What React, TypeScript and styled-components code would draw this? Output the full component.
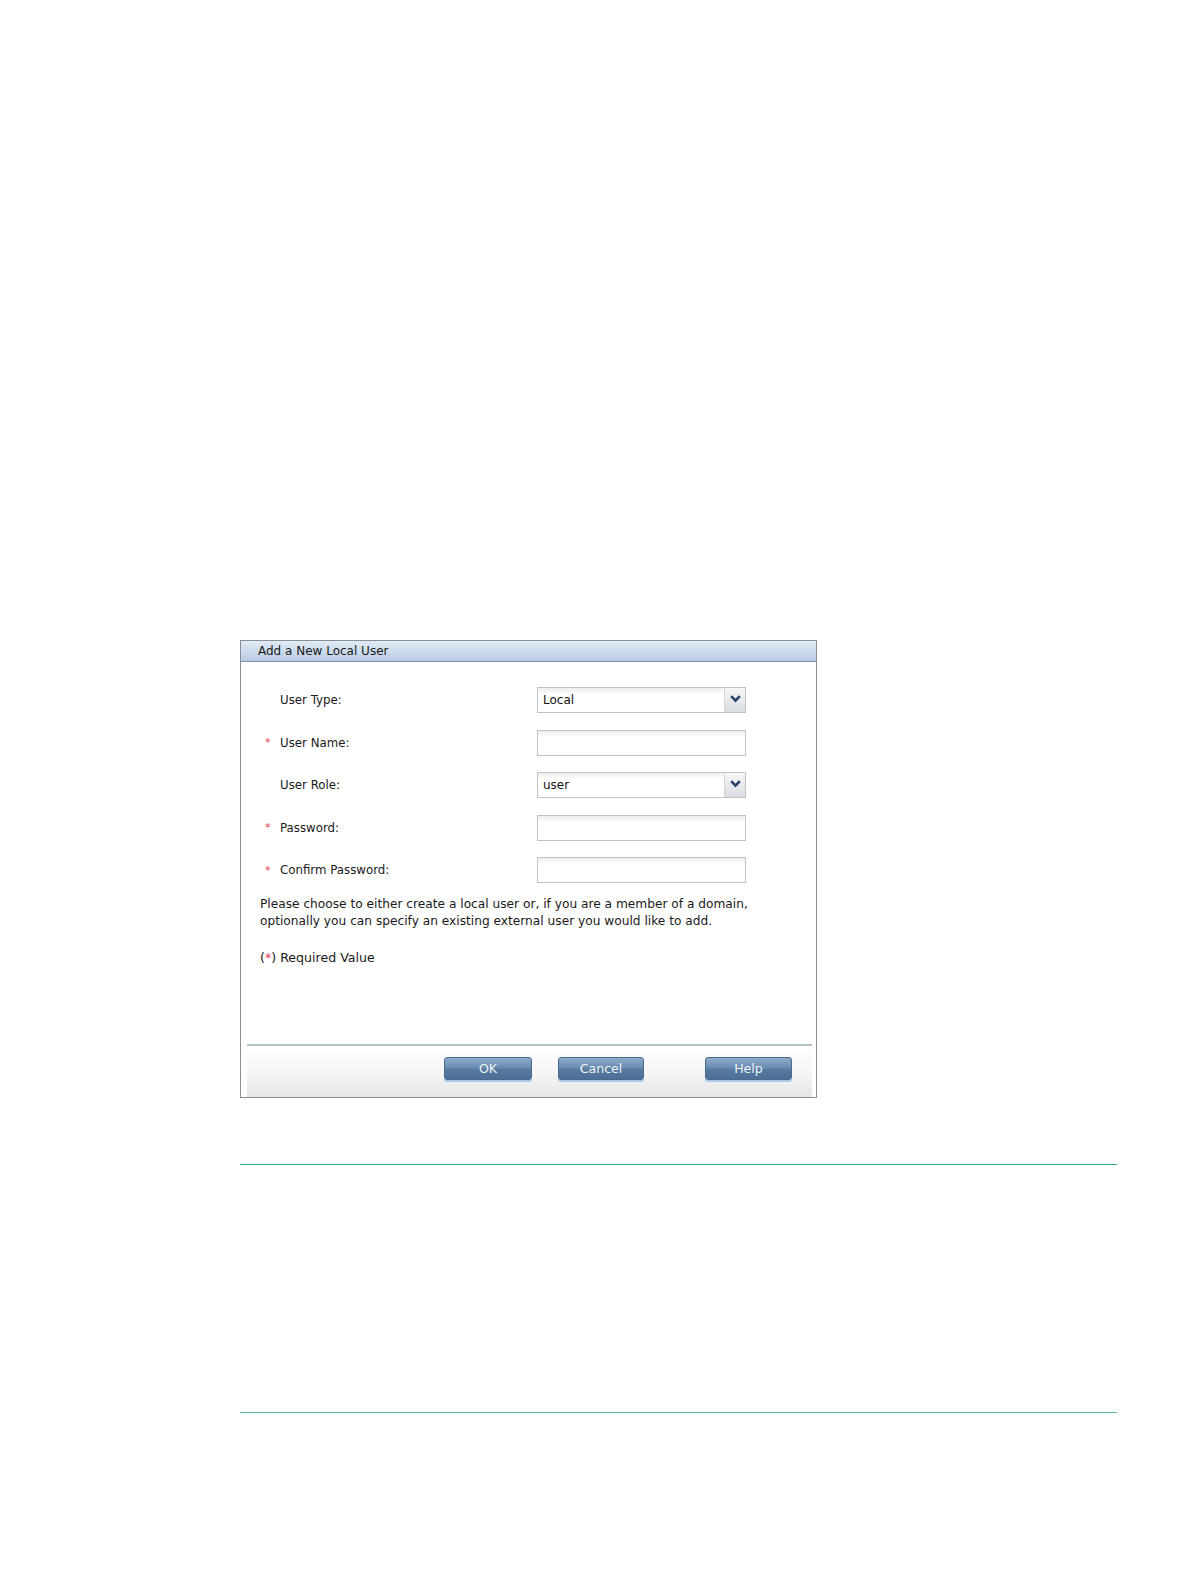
import React from "react";
import styled, { createGlobalStyle } from "styled-components";

const GlobalStyle = createGlobalStyle`
  html, body {
    margin: 0;
    padding: 0;
    background: #ffffff;
  }
  body {
    font-family: "DejaVu Sans", Verdana, sans-serif;
    color: #1a1a1a;
  }
`;

const Page = styled.div`
  width: 1189px;
  height: 1584px;
  box-sizing: border-box;
  padding: 640px 0 0 240px;
  display: flex;
  flex-direction: column;
`;

const Dialog = styled.div`
  width: 577px;
  height: 458px;
  box-sizing: border-box;
  border: 1px solid #8a8f96;
  display: flex;
  flex-direction: column;
  background: #ffffff;
`;

const TitleBar = styled.div`
  height: 21px;
  flex-shrink: 0;
  box-sizing: border-box;
  border-bottom: 1px solid #7f95ad;
  background: linear-gradient(to bottom, #e2eaf5 0%, #cbdaec 55%, #b9cce4 100%);
  padding-left: 17px;
  display: flex;
  align-items: center;
  font-size: 12px;
`;

const Body = styled.div`
  flex: 1;
  padding: 25px 0 0 19px;
  display: flex;
  flex-direction: column;
`;

const Form = styled.div`
  display: flex;
  flex-direction: column;
  gap: 16.5px;
`;

const Row = styled.div`
  display: flex;
  align-items: center;
  height: 26px;
`;

const Label = styled.div`
  width: 277px;
  display: flex;
  align-items: center;
  font-size: 11.8px;
`;

const Star = styled.span<{ $show: boolean }>`
  width: 20px;
  color: #e0405a;
  font-size: 11px;
  padding-left: 5px;
  box-sizing: border-box;
  visibility: ${({ $show }) => ($show ? "visible" : "hidden")};
`;

const Field = styled.div`
  width: 209px;
  height: 26px;
  box-sizing: border-box;
  border: 1px solid #bfc3c8;
  background: linear-gradient(to bottom, #eceded 0px, #ffffff 6px);
  display: flex;
  align-items: stretch;
`;

const FieldText = styled.div`
  flex: 1;
  display: flex;
  align-items: center;
  padding-left: 5px;
  font-size: 12px;
  color: #111;
`;

const DropButton = styled.div`
  width: 21px;
  border-left: 1px solid #d4d7da;
  background: linear-gradient(to bottom, #f6f7f8, #d9dce0);
  display: flex;
  align-items: flex-start;
  justify-content: center;
  padding-top: 7px;
  box-sizing: border-box;
`;

const Note = styled.p`
  margin: 13px 0 0 0;
  font-size: 12.2px;
  line-height: 17px;
`;

const Required = styled.p`
  margin: 20px 0 0 0;
  font-size: 12.6px;
  line-height: 15px;
`;

const RedMark = styled.span`
  color: #e0405a;
`;

const Footer = styled.div`
  height: 53px;
  flex-shrink: 0;
  margin: 0 4px 0 6px;
  border-top: 2px solid #b3c3c6;
  background: linear-gradient(to bottom, #ffffff 0%, #f3f3f3 60%, #e6e6e6 100%);
  display: flex;
  align-items: flex-start;
  padding-top: 11px;
  padding-left: 197px;
  box-sizing: border-box;
`;

const Button = styled.div<{ $width: number; $gap: number }>`
  width: ${({ $width }) => $width}px;
  height: 23px;
  margin-right: ${({ $gap }) => $gap}px;
  box-sizing: border-box;
  border-radius: 3px;
  border: 1px solid #4a6a8c;
  background: linear-gradient(to bottom, #8eabc8 0%, #6a8db2 45%, #56799f 55%, #4d6f95 100%);
  box-shadow: 0 2px 0 #a9c7e6;
  color: #eef3f8;
  font-size: 12.6px;
  display: flex;
  align-items: center;
  justify-content: center;
`;

const Rule = styled.hr<{ $top: number; $color: string }>`
  width: 877px;
  margin: ${({ $top }) => $top}px 0 0 0;
  border: none;
  border-top: 1px solid ${({ $color }) => $color};
  height: 0;
`;

const Chevron = () => (
  <svg width="11" height="8" viewBox="0 0 11 8">
    <path d="M1.2 1.2 L5.5 5.6 L9.8 1.2" fill="none" stroke="#26406a" strokeWidth="2.6" />
  </svg>
);

interface FormRow {
  label: string;
  required: boolean;
  value?: string;
  select?: boolean;
}

const rows: FormRow[] = [
  { label: "User Type:", required: false, value: "Local", select: true },
  { label: "User Name:", required: true },
  { label: "User Role:", required: false, value: "user", select: true },
  { label: "Password:", required: true },
  { label: "Confirm Password:", required: true },
];

const App = () => {
  return (
    <>
      <GlobalStyle />
      <Page>
        <Dialog>
          <TitleBar>Add a New Local User</TitleBar>
          <Body>
            <Form>
              {rows.map((row) => (
                <Row key={row.label}>
                  <Label>
                    <Star $show={row.required}>*</Star>
                    {row.label}
                  </Label>
                  <Field>
                    <FieldText>{row.value}</FieldText>
                    {row.select && (
                      <DropButton>
                        <Chevron />
                      </DropButton>
                    )}
                  </Field>
                </Row>
              ))}
            </Form>
            <Note>
              Please choose to either create a local user or, if you are a member of a domain,
              <br />
              optionally you can specify an existing external user you would like to add.
            </Note>
            <Required>
              (<RedMark>*</RedMark>) Required Value
            </Required>
          </Body>
          <Footer>
            <Button $width={88} $gap={26}>OK</Button>
            <Button $width={86} $gap={61}>Cancel</Button>
            <Button $width={87} $gap={0}>Help</Button>
          </Footer>
        </Dialog>
        <Rule $top={66} $color="#2fa88a" />
        <Rule $top={247} $color="#5cb8a2" />
      </Page>
    </>
  );
};

export default App;
